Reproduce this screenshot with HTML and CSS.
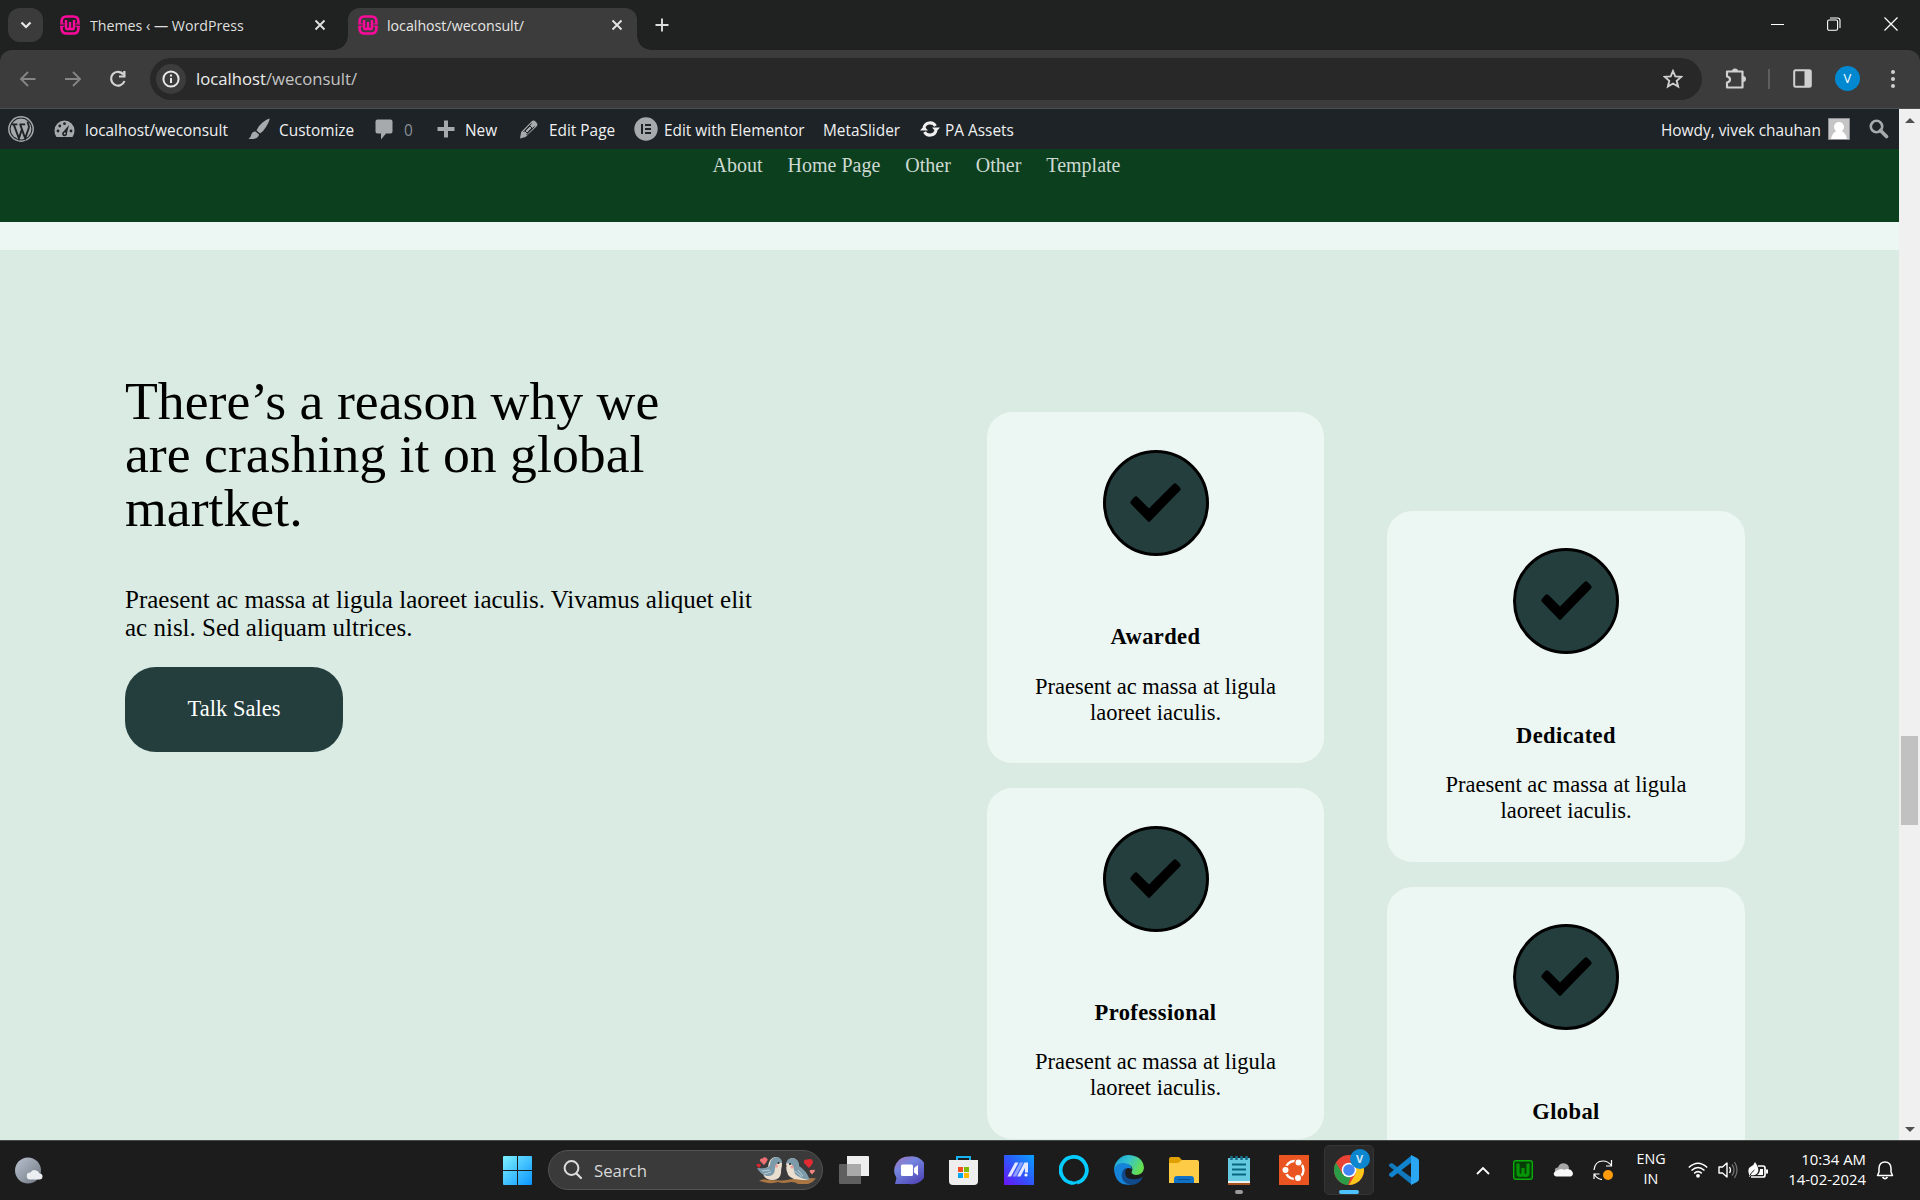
FILE: index.html
```html
<!DOCTYPE html>
<html lang="en">
<head>
<meta charset="utf-8">
<title>localhost/weconsult/</title>
<link rel="stylesheet" href="styles.css">
</head>
<body>
<svg class="defs" aria-hidden="true">
  <defs>
    <symbol id="favicon" viewBox="0 0 20 20"><path d="M1.600 8V6.500q0-5 5-5h6.800q5 0 5 5V8M1.600 12v1.500q0 5 5 5h6.800q5 0 5-5V12" fill="none" stroke="#fa0a9b" stroke-width="2.600"/><path d="M6 5v7q0 2.300 2 2.300 2 0 2-2.300V7v5q0 2.300 2 2.300 2 0 2-2.300V5" fill="none" stroke="#fa0a9b" stroke-width="2.400"/><path d="M0 8.800h4.500M15.500 8.800H20M0 11.300h4.500M15.500 11.300H20" stroke="#fa0a9b" stroke-width="1.200"/></symbol>
    <symbol id="cross" viewBox="0 0 12 12"><path d="M1.500 1.500l9 9M10.500 1.500l-9 9" fill="none" stroke="currentColor" stroke-width="1.900"/></symbol>
    <symbol id="check" viewBox="0 0 51 39"><path d="M6 19.500L19 33 45 6" fill="none" stroke="#000" stroke-width="9"/><path d="M6 16L3 19.500 19 35 48 6 45 3 19 29Z" stroke="#000" stroke-width="5" stroke-linejoin="round"/></symbol>
  </defs>
</svg>

<header class="tabstrip">
  <div class="tab-search"><svg width="12" height="8" viewBox="0 0 12 8"><path d="M1.500 1.500L6 6l4.500-4.500" fill="none" stroke="#e8e8e8" stroke-width="2.200"/></svg></div>
  <div class="tab">
    <svg class="fav" width="20" height="20"><use href="#favicon"/></svg>
    <span class="tab-title">Themes ‹ — WordPress</span>
    <svg width="12" height="12"><use href="#cross"/></svg>
  </div>
  <div class="tab tab-active">
    <svg class="fav" width="20" height="20"><use href="#favicon"/></svg>
    <span class="tab-title">localhost/weconsult/</span>
    <svg width="12" height="12"><use href="#cross"/></svg>
  </div>
  <svg class="newtab" width="14" height="14" viewBox="0 0 14 14"><path d="M7 .5v13M.5 7h13" stroke="#ddd" stroke-width="1.900"/></svg>
  <div class="window-buttons">
    <svg width="13" height="14" viewBox="0 0 13 14"><path d="M0 7.500h13" stroke="#fff"/></svg>
    <svg width="14" height="14" viewBox="0 0 14 14"><rect x=".6" y="3" width="10" height="10.300" rx="1.500" fill="none" stroke="#fff" stroke-width="1.100"/><path d="M3 1h7.500Q13 1 13 3.500V11" fill="none" stroke="#fff" stroke-width="1.100"/></svg>
    <svg width="14" height="14" viewBox="0 0 14 14"><path d="M.5.500l13 13M13.500.500l-13 13" stroke="#fff" stroke-width="1.200"/></svg>
  </div>
</header>

<div class="toolbar">
  <svg width="18" height="18" viewBox="0 0 18 18"><path d="M16.500 9H2M9 2L2 9l7 7" fill="none" stroke="#858585" stroke-width="1.900"/></svg>
  <svg width="18" height="18" viewBox="0 0 18 18"><path d="M1 9h14.500M9 2l7 7-7 7" fill="none" stroke="#858585" stroke-width="1.900"/></svg>
  <svg width="18" height="18" viewBox="0 0 18 18"><path d="M15.500 11A6.900 6.900 0 1 1 14.500 4.500" fill="none" stroke="#d5d5d5" stroke-width="2.200"/><path d="M16.500 1v6.500H10V5.500h4.200V1z" fill="#d5d5d5"/></svg>
  <div class="omnibox">
    <span class="site-info"><svg width="18" height="18" viewBox="0 0 18 18"><circle cx="9" cy="9" r="7.600" fill="none" stroke="#e8e8e8" stroke-width="2"/><path d="M9 8v5M9 4.600v2" stroke="#e8e8e8" stroke-width="2"/></svg></span>
    <span class="url">localhost<span class="url-path">/weconsult/</span></span>
    <svg width="20" height="20" viewBox="0 0 20 20"><path d="M10 2l2.300 5.400 5.900.5-4.500 3.900 1.400 5.700L10 14.500l-5.100 3 1.400-5.700L1.800 7.900l5.900-.5z" fill="none" stroke="#d0d0d0" stroke-width="1.900"/></svg>
  </div>
  <svg class="puzzle" width="22" height="22" viewBox="0 0 22 22"><path d="M2 3.500h15.500v16H2v-5q3-.5 3-3t-3-3z" fill="none" stroke="#d0d0d0" stroke-width="2.200" stroke-linejoin="round"/><path d="M7 3a3 2.500 0 0 1 6 0zM18 8a3 3 0 0 1 0 6z" fill="#d0d0d0"/></svg>
  <i class="bar-divider"></i>
  <svg width="19" height="19" viewBox="0 0 19 19"><rect x="1.200" y="1.200" width="16.600" height="16.600" rx="1.500" fill="none" stroke="#d0d0d0" stroke-width="2"/><path d="M11.500 1.500h6v16h-6z" fill="#d0d0d0"/></svg>
  <span class="profile">V</span>
  <svg width="4" height="18" viewBox="0 0 4 18" fill="#d0d0d0"><circle cx="2" cy="2" r="2"/><circle cx="2" cy="9" r="2"/><circle cx="2" cy="16" r="2"/></svg>
</div>

<div class="viewport">
  <div class="site">
    <div class="adminbar">
      <svg width="26" height="26" viewBox="0 0 25 25"><circle cx="12.500" cy="12.500" r="11.700" fill="none" stroke="#a7aaad" stroke-width="1.400"/><circle cx="12.500" cy="12.500" r="10" fill="#a7aaad"/><path d="M3.500 8h5.500M11 8h5.500M5.500 8l5 13.500 2.800-8.500M11.700 8l4.800 13.500 3.500-10c.7-3-1.500-4-1-6" fill="none" stroke="#1d2327" stroke-width="1.800"/></svg>
      <svg width="21" height="18" viewBox="0 0 21 18"><path d="M2.500 17A10 10 0 0 1 .5 10.500a10 10 0 0 1 20 0Q20.500 14 18.500 17z" fill="#a7aaad"/><g fill="#1d2327"><circle cx="4" cy="11" r="1.400"/><circle cx="5.800" cy="6" r="1.400"/><circle cx="10.500" cy="3.700" r="1.400"/><circle cx="17" cy="11" r="1.400"/><path d="M15 5l-2 8a2.500 2.500 0 1 1-3.500-1.500z"/></g><circle cx="10.800" cy="13.500" r="1" fill="#a7aaad"/></svg>
      <span>localhost/weconsult</span>
      <svg width="22" height="22" viewBox="0 0 22 22" fill="#a7aaad"><path d="M21.500.5Q22 2 18 9q-3 5-6 6.500L8.500 12.500Q10 8 14.500 4.500 19 1 21.500.5zM7.500 13.500l3.500 3q-.5 5-10.500 4.500Q3 19 3.500 16q1-3 4-2.500z"/></svg>
      <span>Customize</span>
      <svg width="18" height="21" viewBox="0 0 18 21" fill="#a7aaad"><path d="M2.500.5h13q2 0 2 2v10q0 2-2 2H11L6 20.500v-6H2.500q-2 0-2-2v-10q0-2 2-2z"/></svg>
      <span class="dim">0</span>
      <svg width="18" height="18" viewBox="0 0 18 18"><path d="M9 .5v17M.5 9h17" stroke="#a7aaad" stroke-width="4"/></svg>
      <span>New</span>
      <svg width="19" height="19" viewBox="0 0 19 19"><path d="M12.500 1.500q2-2 4.500.5t.5 4.500L6.500 17 1 18.500 2.200 12z" fill="#a7aaad"/><path d="M12.500 3.500l-8 8.500M15.500 6.500l-8 8.500M11 6l2 2-5 5-2-2z" stroke="#1d2327" stroke-width="1" fill="none"/></svg>
      <span>Edit Page</span>
      <svg width="24" height="24" viewBox="0 0 24 24"><circle cx="12" cy="12" r="11.700" fill="#a7aaad"/><path d="M8 7v10M11 8h6M11 12h6M11 16h6" stroke="#1d2327" stroke-width="2"/></svg>
      <span>Edit with Elementor</span>
      <span>MetaSlider</span>
      <svg width="20" height="18" viewBox="0 0 20 18"><path d="M4 7.500A6.300 6.300 0 0 1 15.500 6M16 10.500A6.300 6.300 0 0 1 4.500 12" fill="none" stroke="#f0f0f1" stroke-width="3"/><path d="M12 7.500h8l-4 4.500zM0 10.500L4 6l4 4.500z" fill="#f0f0f1"/></svg>
      <span>PA Assets</span>
      <span class="howdy">Howdy, vivek chauhan</span>
      <svg width="22" height="22" viewBox="0 0 22 22"><path d="M.5.500h21v21H.5z" fill="#c5c5c5" stroke="#8c8f94"/><circle cx="11" cy="9" r="5" fill="#fff"/><path d="M3 21q1-6 5.500-8h5q4.500 2 5.500 8z" fill="#fff"/></svg>
      <svg width="20" height="20" viewBox="0 0 20 20"><circle cx="7.500" cy="7.500" r="5.700" fill="none" stroke="#a7aaad" stroke-width="2.600"/><path d="M11.500 11.500l6 6" stroke="#a7aaad" stroke-width="3.600" stroke-linecap="round"/></svg>
    </div>
    <nav class="sitenav"><a>About</a><a>Home Page</a><a>Other</a><a>Other</a><a>Template</a></nav>
    <div class="strip"></div>
    <main class="reason">
      <section class="pitch">
        <h1>There’s a reason why we<br>are crashing it on global<br>martket.</h1>
        <p>Praesent ac massa at ligula laoreet iaculis. Vivamus aliquet elit<br>ac nisl. Sed aliquam ultrices.</p>
        <a class="cta">Talk Sales</a>
      </section>
      <div class="column">
        <article class="card"><span class="badge"><svg width="51" height="39"><use href="#check"/></svg></span><h2>Awarded</h2><p>Praesent ac massa at ligula<br>laoreet iaculis.</p></article>
        <article class="card"><span class="badge"><svg width="51" height="39"><use href="#check"/></svg></span><h2>Professional</h2><p>Praesent ac massa at ligula<br>laoreet iaculis.</p></article>
      </div>
      <div class="column column-low">
        <article class="card"><span class="badge"><svg width="51" height="39"><use href="#check"/></svg></span><h2>Dedicated</h2><p>Praesent ac massa at ligula<br>laoreet iaculis.</p></article>
        <article class="card"><span class="badge"><svg width="51" height="39"><use href="#check"/></svg></span><h2>Global</h2></article>
      </div>
    </main>
  </div>
  <div class="scrollbar"><i class="arrow-up"></i><i class="thumb"></i><i class="arrow-down"></i></div>
</div>

<footer class="taskbar">
  <svg class="weather" width="28" height="27" viewBox="0 0 28 27"><defs><linearGradient id="moon" x2="1" y2="1"><stop stop-color="#b9c3cf"/><stop offset="1" stop-color="#6e7680"/></linearGradient></defs><circle cx="13" cy="13.500" r="13" fill="url(#moon)"/><path d="M15 22.500a3.500 3.500 0 0 1 .5-7 5 5 0 0 1 9 1 3 3 0 0 1 0 6z" fill="#eceff2"/></svg>
  <svg class="start" width="29" height="29" viewBox="0 0 29 29"><defs><linearGradient id="win" x2="1" y2="1"><stop stop-color="#7df0ff"/><stop offset="1" stop-color="#0a95ff"/></linearGradient></defs><path d="M0 1q0-1 1-1h13v14H0zM15 0h13q1 0 1 1v13H15zM0 15h14v14H1q-1 0-1-1zM15 15h14v13q0 1-1 1H15z" fill="url(#win)"/></svg>
  <div class="search">
    <svg width="20" height="20" viewBox="0 0 20 20"><circle cx="8.500" cy="8" r="6.900" fill="none" stroke="#ddd" stroke-width="2"/><path d="M13.500 13.500l4.500 4.500" stroke="#ddd" stroke-width="2.200" stroke-linecap="round"/></svg>
    <span>Search</span>
    <svg width="60" height="28" viewBox="0 0 60 28">
      <path d="M3 25q4-3 9-1l14 .5q10-1 16-3l9 1q5-1 9 0-3 4-8 5.500H42q-4-3-10-1.500-5 1-10-.5-4 1.500-10 1z" fill="#a97543"/>
      <path d="M19 1q7 0 7 8-1 4-1 8-1 7-8 7-8 0-10-6l-5-5q6 1 10-2 1-9 7-10z" fill="#eadfce"/><path d="M14 8q1-7 7-7 5 1 5 6-4-1-6 2l-1 3q0 9-8 8-6-1-10-8 7 1 11-1 2-1 2-3z" fill="#7d9aab"/>
      <path d="M37 2q-6 0-7 7 0 12 8 14l8 1h6q-4-8-9-12 0-9-6-10z" fill="#eadfce"/><path d="M30 8q1-6 7-6 6 1 6 8 7 4 11 14-10-1-15-6l-2-8q-3-4-7-2z" fill="#7d9aab"/>
      <circle cx="22.500" cy="7" r="1" fill="#222"/><circle cx="34" cy="8" r="1" fill="#222"/><circle cx="20.500" cy="10" r="1.500" fill="#ef9a92"/><circle cx="36" cy="11" r="1.500" fill="#ef9a92"/><path d="M26 8l2.500 1-2.500 1zM30.500 9l-2 1 2 1z" fill="#333"/><path d="M6 15l8-1M8 18l7-2M42 14l5 6M39 15l7 6" stroke="#b9ced8"/>
      <path d="M8 9L4 5q-.5-3 2.500-2.500Q9 0 11.500 3 12 5 8 9z" fill="#ef6f72"/><path d="M3 12L.5 9.500q0-2.500 2-1.500 3-.5 2.500 1.500z" fill="#d9262e"/><path d="M53 12l-5-5q-1-4 3.500-3.500Q56 2 57 5.500 57 8 53 12z" fill="#e32a32"/><path d="M56 18.500l-2.500-3q.5-2.500 2.500-1.500 3-1 3 1z" fill="#f0857f"/>
    </svg>
  </div>
  <div class="apps">
    <span class="app"><svg width="30" height="28" viewBox="0 0 30 28"><path d="M8 0h21q1 0 1 1v19H8z" fill="#eee"/><path d="M1 8h21v20H1q-1 0-1-1V9q0-1 1-1z" fill="#6b6b6b" opacity=".85"/><path d="M8 8h14v12H8z" fill="#a9a9a9"/></svg></span>
    <span class="app"><svg width="30" height="29" viewBox="0 0 30 29"><defs><linearGradient id="team" x2=".7" y2="1"><stop stop-color="#a674b9"/><stop offset=".4" stop-color="#7385df"/><stop offset="1" stop-color="#5147b9"/></linearGradient></defs><path d="M15.500.5a14 14 0 1 1 0 27.500H1l1.500-6A14 14 0 0 1 15.500.5z" fill="url(#team)"/><rect x="7" y="8.500" width="12" height="11.500" rx="1.500" fill="#fff"/><path d="M20 12l4-3v10.500l-4-3z" fill="#fff"/></svg></span>
    <span class="app"><svg width="29" height="29" viewBox="0 0 29 29"><path d="M8 5V1h13v4" fill="none" stroke="#18b4f2" stroke-width="2"/><path d="M0 4h29v21q0 4-4 4H4q-4 0-4-4z" fill="#eee"/><path d="M9 11h5v5H9z" fill="#f25022"/><path d="M15 11h5v5h-5z" fill="#7fba00"/><path d="M9 17h5v5H9z" fill="#00a4ef"/><path d="M15 17h5v5h-5z" fill="#ffb900"/></svg></span>
    <span class="app"><svg width="30" height="30" viewBox="0 0 30 30"><defs><linearGradient id="asus" x1="0" y1="1" x2="1" y2="0"><stop stop-color="#6a12f5"/><stop offset=".5" stop-color="#2f57fa"/><stop offset="1" stop-color="#08a2ff"/></linearGradient></defs><path d="M0 0h30v30H0z" fill="url(#asus)"/><path d="M3.500 21.500L11 7.500h3.500L7 21.500zM13 21.500l7.500-14H24v10h-3V13l-4.500 8.500z" fill="#e4e8ff"/><path d="M8.500 21.500L16 7.500h3.500L12 21.500z" fill="#a9b8ff" opacity=".75"/><circle cx="22" cy="20" r="1.600" fill="#fff"/></svg></span>
    <span class="app"><svg width="30" height="30" viewBox="0 0 30 30"><path d="M13 28A13.100 13.100 0 1 1 18 27.700" fill="none" stroke="#05cbff" stroke-width="3.800"/><path d="M12.500 30v-4q5 1.500 9-1.500-3 5-9 5.500z" fill="#05cbff"/></svg></span>
    <span class="app"><svg width="30" height="30" viewBox="0 0 30 30"><defs><linearGradient id="edge" x2="1" y2=".4"><stop stop-color="#159bd8"/><stop offset=".5" stop-color="#35c2cf"/><stop offset="1" stop-color="#65df51"/></linearGradient></defs><path d="M0 15A15 15 0 0 1 15 0q14 1 15 13-1 7-8 7-6-1-4-4 2-5-5-7Q4 8 0 15z" fill="url(#edge)"/><path d="M0 15Q2 8 9 8q8 0 9 6-6-3-8 3 0 8 8 12.500Q2 32 0 15z" fill="#1583d8"/><path d="M12 13q-3 11 6 11 5 1 11-2-4 8-12 8Q6 27 8 18q1-4 4-5z" fill="#114a8b"/></svg></span>
    <span class="app"><svg width="30" height="27" viewBox="0 0 30 27"><path d="M0 2q0-2 2-2h8l3 3h15v8H0z" fill="#dfa000"/><path d="M0 6h9l4-3h15q2 0 2 2v21H0z" fill="#fdcb45"/><path d="M5 26v-4q0-3 3-3h14q3 0 3 3v4z" fill="#1072c6"/><path d="M9 22.500h12" stroke="#074f91"/></svg></span>
    <span class="app running"><svg width="22" height="29" viewBox="0 0 22 29"><path d="M0 2h22v25H0z" fill="#64cae0"/><path d="M0 25h22v2H0z" fill="#f0f0ee"/><path d="M0 27h22v2H0z" fill="#a6531e"/><path d="M4 8.500h14M4 13.500h14M4 18.500h14" stroke="#08677e" stroke-width="1.800"/><path d="M3.500 0v4M8.500 0v4M13.500 0v4M18.500 0v4" stroke="#176f87" stroke-width="2.500"/></svg></span>
    <span class="app"><svg width="30" height="30" viewBox="0 0 30 30"><path d="M0 0h30v30H0z" fill="#e95420"/><circle cx="15.500" cy="15" r="9" fill="none" stroke="#fff" stroke-width="2.400"/><g fill="#fff" stroke="#e95420" stroke-width="1.400"><circle cx="6.500" cy="15" r="3.700"/><circle cx="19.500" cy="7.500" r="3.700"/><circle cx="19" cy="23" r="3.700"/></g></svg></span>
    <span class="app current"><svg width="30" height="30" viewBox="0 0 30 30"><circle cx="15" cy="15" r="15" fill="#ea4335"/><path d="M2 7.500L8.500 19l8 3L14 30A15 15 0 0 1 2 7.500z" fill="#2c9b47"/><path d="M15 30l7-12V8h6.300A15 15 0 0 1 15 30z" fill="#fcc61b"/><circle cx="15" cy="15" r="7.300" fill="#fff"/><circle cx="15" cy="15" r="5.800" fill="#4285f4"/></svg><b class="app-badge">V</b></span>
    <span class="app"><svg width="30" height="30" viewBox="0 0 30 30"><path d="M3 8L23 23v7L.500 11.500q-1-1.500 0-2.500z" fill="#1279bd"/><path d="M3 22.500L23 7V0L.500 18.500q-1 1.500 0 2.500z" fill="#1184cf"/><path d="M22 0l6 3q2 1 2 3v18q0 2-2 3l-6 3V0z" fill="#2aa6f2"/></svg></span>
  </div>
  <div class="tray">
    <svg width="14" height="9" viewBox="0 0 14 9"><path d="M1 8l6-6 6 6" fill="none" stroke="#fff" stroke-width="1.800"/></svg>
    <svg width="20" height="20" viewBox="0 0 20 20"><rect x=".7" y=".7" width="18.600" height="18.600" rx="2" fill="#063d06" stroke="#0cab0c" stroke-width="1.400"/><path d="M5 3.500v9q0 3 2.500 3T10 12.500V8v4.500q0 3 2.500 3t2.500-3v-9" fill="none" stroke="#079407" stroke-width="3.200"/></svg>
    <svg width="20" height="14" viewBox="0 0 20 14"><path d="M3 10.500Q0 5 5 4.500q2-5 7-4 4 1 4 5l-5 6z" fill="#a7a7a7"/><path d="M3 13.500q-4-2-1-5l3-1.500q4-2 6 0 3-2 7 0 4 4 0 6.500z" fill="#f7f7f7"/></svg>
    <svg width="20" height="20" viewBox="0 0 20 20"><path d="M1 10Q2 1 10 1q5 0 8.500 4.500M18.500 0v6h-5.500M1 19v-5h5.500M1.500 14.500Q4 19 9 19.500" fill="none" stroke="#fff" stroke-width="1.200"/><circle cx="15" cy="15" r="5" fill="#ff9b0b"/></svg>
    <span class="lang">ENG<br>IN</span>
    <svg width="20" height="16" viewBox="0 0 20 16"><path d="M.8 5.500q9.200-8.500 18.400 0M3.500 8.500q6.500-6 13 0M6.200 11.300q3.800-3.400 7.600 0" fill="none" stroke="#fff" stroke-width="1.600"/><circle cx="10" cy="13.800" r="1.900" fill="#fff"/></svg>
    <svg width="20" height="18" viewBox="0 0 20 18"><path d="M1 6h3.500L9 2v14l-4.500-4H1z" fill="none" stroke="#fff" stroke-width="1.400" stroke-linejoin="round"/><path d="M11.500 6q2 3 0 6" fill="none" stroke="#fff" stroke-width="1.300"/><path d="M14 3.500q4 5.500 0 11M16.500 1q5 8 0 16" fill="none" stroke="#707070" stroke-width="1.300"/></svg>
    <svg width="20" height="17" viewBox="0 0 20 17"><path d="M10 4h5q2 0 2 2v7q0 2-2 2H3" fill="none" stroke="#fff" stroke-width="1.700"/><path d="M18 7.500h2v4h-2zM12 7h3v6H9q3-2 3-6z" fill="#fff"/><path d="M7 0q5 7 2.500 11-2.500 3-6 2L1 15v-3q-2-6 2-7.500Q6 3 7 0z" fill="#fff"/><path d="M1.500 14q2-4 5-6" stroke="#1d1d1d" fill="none"/></svg>
    <span class="clock">10:34 AM<br>14-02-2024</span>
    <svg width="18" height="19" viewBox="0 0 18 19"><path d="M1.500 14.500L3 11V7q.5-6 6-6t6 6v4l1.500 3.500z" fill="none" stroke="#fff" stroke-width="1.500" stroke-linejoin="round"/><path d="M6.500 16q2.500 3.500 5 0" fill="none" stroke="#fff" stroke-width="1.600"/></svg>
  </div>
</footer>
</body>
</html>
```
FILE: styles.css
```css
* { box-sizing: border-box; }
body { margin: 0; width: 1920px; height: 1200px; overflow: hidden; display: flex; flex-direction: column; background: #202221; font-family: "Open Sans", "Noto Sans", sans-serif; }
svg { display: block; flex: none; }
.defs { position: absolute; width: 0; height: 0; }

/* browser tab strip */
.tabstrip { height: 50px; flex: none; display: flex; background: #202221; }
.tab-search { width: 35px; height: 34px; margin: 8px 5px 0 8px; border-radius: 12px; background: #3b3b3b; display: grid; place-items: center; }
.tab { width: 300px; height: 42px; margin-top: 8px; padding: 0 22px 8px 12px; display: flex; align-items: center; color: #dfdfdf; font-size: 14.2px; }
.tab-title { flex: 1; margin-left: 10px; white-space: nowrap; }
.tab-active { position: relative; width: 289px; padding-left: 10px; padding-right: 14px; background: #3c3c3c; border-radius: 12px 12px 0 0; color: #e6e6e6; }
.tab-active .tab-title { margin-left: 9px; }
.tab-active::before, .tab-active::after { content: ""; position: absolute; bottom: 0; width: 14px; height: 14px; }
.tab-active::before { left: -14px; background: radial-gradient(circle at 0 0, transparent 13.5px, #3c3c3c 14px); }
.tab-active::after { right: -14px; background: radial-gradient(circle at 100% 0, transparent 13.5px, #3c3c3c 14px); }
.newtab { margin: 18px 0 0 18px; }
.window-buttons { margin: 17px 22px 0 auto; display: flex; gap: 43px; }

/* address bar */
.toolbar { height: 59px; flex: none; display: flex; align-items: center; padding: 0 25px 1px 19px; background: #3c3c3c; border-bottom: 1px solid #4c504f; border-radius: 12px 12px 0 0; }
.toolbar > svg + svg { margin-left: 27px; }
.omnibox { height: 42px; margin-left: 23px; padding: 0 19px 0 6px; display: flex; align-items: center; border-radius: 21px; background: #282828; flex: 1; }
.site-info { width: 30px; height: 30px; border-radius: 50%; background: #3c3c3c; display: grid; place-items: center; }
.url { flex: 1; margin-left: 10px; color: #ececec; font-size: 16.7px; }
.url-path { color: #c4c4c4; }
.toolbar .puzzle { margin-left: 23px; }
.bar-divider { width: 2px; height: 20px; margin: 0 23px 0 21px; background: #5d5f5f; }
.profile { width: 25px; height: 25px; margin: 0 31px 0 23px; border-radius: 50%; background: #0288d1; color: #fff; font-size: 13px; line-height: 25px; text-align: center; }

/* page viewport */
.viewport { height: 1031px; flex: none; display: flex; overflow: hidden; }
.site { width: 1899px; height: 1031px; overflow: hidden; background: #daebe3; font-family: "Liberation Serif", "Times New Roman", serif; }
.adminbar { height: 40px; padding-left: 8px; display: grid; grid-template-columns: 46px 31px 163px 31px 96px 29px 33px 28px 54px 30px 85px 30px 159px 97px 25px 716px 167px 41px 20px; align-items: center; background: #1d2327; color: #f0f0f1; font: 15.4px/36px "Open Sans", "Noto Sans", sans-serif; white-space: nowrap; }
.adminbar span { padding-top: 4px; }
.adminbar .dim { color: #8b8f94; }
.adminbar .howdy { justify-self: start; }
.sitenav { height: 73px; padding: 5px 0 0 712.5px; display: flex; gap: 25px; background: #0b3f1e; color: #ced9d2; font-size: 20px; line-height: 23px; }
.strip { height: 28px; background: #ecf6f2; }
.reason { display: flex; align-items: flex-start; padding-left: 125px; color: #000; }
.pitch { width: 862px; padding-top: 125px; }
.pitch h1 { margin: 0; font-size: 53.75px; font-weight: 400; line-height: 53.4px; }
.pitch p { margin: 50.3px 0 25px; font-size: 25px; line-height: 28px; }
.cta { display: block; width: 218px; height: 85px; border-radius: 31px; background: #243d3d; color: #fff; font-size: 22.5px; line-height: 83px; text-align: center; }
.column { width: 337px; padding-top: 162px; display: flex; flex-direction: column; gap: 25px; }
.column-low { width: 358px; margin-left: 63px; padding-top: 261px; }
.card { height: 351px; padding-top: 38px; display: flex; flex-direction: column; align-items: center; border-radius: 25px; background: #ecf6f2; }
.badge { width: 106px; height: 106px; flex: none; padding-bottom: 1px; border: 3px solid #000; border-radius: 50%; background: #243d3d; display: grid; place-items: center; }
.card h2 { margin: 68px 0 0; font-size: 22.5px; line-height: 26px; letter-spacing: .4px; }
.card p { margin: 24px 0 0; font-size: 22.5px; line-height: 26px; text-align: center; }
.column-low .card { padding-top: 37px; }
.column-low h2 { margin-top: 69px; }
.column-low p, .card + .card p { margin-top: 23px; }
.scrollbar { width: 21px; height: 1031px; background: #f0f0f0; display: flex; flex-direction: column; align-items: center; }
.arrow-up { margin-top: 9px; border: 5px solid transparent; border-top: 0; border-bottom-color: #505050; }
.thumb { width: 17px; height: 89px; margin-top: 613px; background: #c1c1c1; }
.arrow-down { margin-top: 302px; border: 5px solid transparent; border-bottom: 0; border-top-color: #505050; }

/* desktop taskbar */
.taskbar { height: 60px; flex: none; display: flex; align-items: center; padding-bottom: 1px; border-top: 1px solid #484a49; background: #1c1c1c; color: #fff; }
.weather { margin-left: 15px; }
.start { margin-left: 460px; }
.search { width: 275px; height: 40px; margin-left: 16px; padding: 0 6px 0 14px; display: flex; align-items: center; border: 1px solid #535353; border-radius: 20px; background: #3a3a3a; }
.search span { flex: 1; margin-left: 11px; font-size: 16.8px; color: #d8d8d8; }
.apps { margin-left: 3px; display: flex; }
.app { position: relative; width: 55px; height: 50px; display: grid; place-items: center; }
.running::after { content: ""; position: absolute; bottom: 1px; left: 24px; width: 8px; height: 4px; border-radius: 2px; background: #9b9b9b; }
.current { width: 50px; margin: 0 2.5px; border: 1px solid #353535; border-radius: 5px; background: #2a2a2a; }
.current::after { content: ""; position: absolute; bottom: 0; left: 14px; width: 20px; height: 4px; border-radius: 2px; background: #4cc2ff; }
.app-badge { position: absolute; right: 3px; top: 3px; width: 20px; height: 20px; border-radius: 50%; background: #0b86cf; color: #cfe6f6; font-size: 11px; line-height: 20px; text-align: center; }
.tray { margin-left: 45px; display: grid; grid-template-columns: 37px 40px 40px 40px 55px 30px 30px 31px 97px 18px; align-items: center; }
.lang, .clock { font-size: 14.3px; line-height: 20px; margin-top: -2px; }
.lang { width: 36px; text-align: center; }
.clock { width: 87px; font-size: 14.9px; text-align: right; white-space: nowrap; }
```
